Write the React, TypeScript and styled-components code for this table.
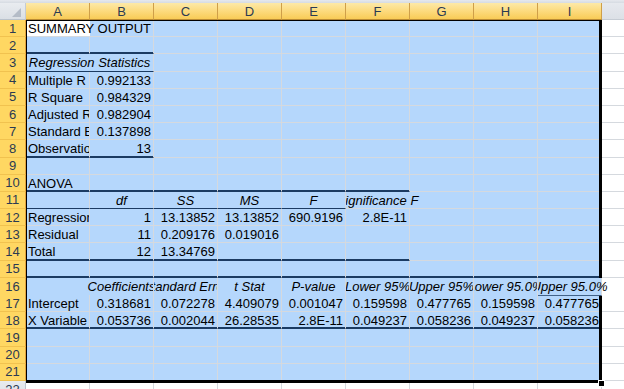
import React from "react";
import styled, { createGlobalStyle, css } from "styled-components";

const COL_W = 64;
const ROW_H = 17.2;
const BLUE = "#b5d7fc";
const GRID = "#d5d9de";
const NAVY = "#1b3b62";
const COLUMNS = `26px repeat(9, ${COL_W}px) 1fr`;
const LETTERS = ["A", "B", "C", "D", "E", "F", "G", "H", "I"];

type Align = "left" | "right" | "center";

interface CellDef {
  col: number;
  text: string;
  span?: number;
  align?: Align;
  italic?: boolean;
  own?: number; // column inside the span that owns the text
  cols?: number; // width of the text box, in columns
  spill?: boolean; // text may run out to the right
}

interface RowDef {
  cells?: CellDef[];
  line?: "thin" | "thick";
  lineTo?: number;
}

const GlobalStyle = createGlobalStyle`
  html, body { margin: 0; padding: 0; background: #fff; }
  body { font-family: "Liberation Sans", Arial, sans-serif; }
`;

const Sheet = styled.div`
  position: relative;
  width: 624px;
  height: 389px;
  overflow: hidden;
  font: 13px "Liberation Sans", Arial, sans-serif;
  color: #000;
  background: #fff;
`;

const TopStrip = styled.div`
  height: 3px;
  background: linear-gradient(#e6e9ee, #d6dbe2);
`;

const HeaderRow = styled.div`
  display: grid;
  grid-template-columns: ${COLUMNS};
  height: 17px;
`;

const Corner = styled.div`
  display: flex;
  align-items: flex-end;
  justify-content: flex-end;
  box-sizing: border-box;
  padding: 0 4px 2px 0;
  background: linear-gradient(#e9ecf0, #dadfe5);
  border-right: 1px solid #c4cbd4;
  border-bottom: 1px solid #b9c2cc;
`;

const ColHead = styled.div<{ $selected: boolean }>`
  box-sizing: border-box;
  display: flex;
  align-items: center;
  justify-content: center;
  color: #2b3a52;
  ${(p) =>
    p.$selected
      ? css`
          background: linear-gradient(#fde9a8, #fcd97a 55%, #f8cb56);
          border-right: 1px solid #cf9f49;
          border-bottom: 1px solid #b98a34;
        `
      : css`
          background: linear-gradient(#e6e9ee, #dce0e6);
          border-bottom: 1px solid #c6ccd4;
        `}
`;

const Row = styled.div`
  display: grid;
  grid-template-columns: ${COLUMNS};
  height: ${ROW_H}px;
`;

const RowHead = styled.div<{ $selected: boolean }>`
  box-sizing: border-box;
  display: flex;
  align-items: center;
  justify-content: center;
  color: #2b3a52;
  ${(p) =>
    p.$selected
      ? css`
          background: #ffd762;
          border-right: 1px solid #e2a23a;
          border-bottom: 1px solid #f1c24f;
        `
      : css`
          background: linear-gradient(#e8ebef, #dde1e7);
          border-right: 1px solid #b9c2cc;
          border-bottom: 1px solid #c6ccd4;
        `}
`;

const Cell = styled.div<{
  $span: number;
  $fill: string;
  $line?: "thin" | "thick";
  $spill?: boolean;
  $edge?: boolean;
}>`
  grid-column: span ${(p) => p.$span};
  box-sizing: border-box;
  min-width: 0;
  background: ${(p) => p.$fill};
  border-right: ${(p) => (p.$edge ? "none" : `1px solid ${GRID}`)};
  border-bottom: 1px solid ${(p) => (p.$line ? NAVY : GRID)};
  box-shadow: ${(p) => (p.$line === "thick" ? `inset 0 -1px 0 ${NAVY}` : "none")};
  overflow: ${(p) => (p.$spill ? "visible" : "hidden")};
  ${(p) =>
    p.$spill &&
    css`
      z-index: 1;
      clip-path: inset(0 -40px 0 0);
    `}
`;

const CellText = styled.div<{ $align: Align; $own: number; $cols: number; $italic?: boolean }>`
  display: flex;
  justify-content: ${(p) =>
    p.$align === "right" ? "flex-end" : p.$align === "center" ? "center" : "flex-start"};
  box-sizing: border-box;
  width: ${(p) => p.$cols * COL_W - 1}px;
  margin-left: ${(p) => p.$own * COL_W}px;
  padding: 0 2px;
  line-height: 17px;
  white-space: nowrap;
  font-style: ${(p) => (p.$italic ? "italic" : "normal")};
`;

const Label = styled.span`
  flex-shrink: 0;
`;

const Selection = styled.div`
  position: absolute;
  top: 20px;
  left: 26px;
  width: 576px;
  height: 363px;
  box-sizing: border-box;
  border: solid #000;
  border-width: 1px 3px 3px 1px;
  pointer-events: none;
`;

const FillHandle = styled.div`
  position: absolute;
  left: 598px;
  top: 380px;
  width: 5px;
  height: 5px;
  background: #000;
  border: 1px solid #fff;
`;

const txt = (col: number, text: string, extra: Partial<CellDef> = {}): CellDef => ({
  col,
  text,
  ...extra,
});
const num = (col: number, text: string): CellDef => ({ col, text, align: "right" });
const head = (col: number, text: string, extra: Partial<CellDef> = {}): CellDef => ({
  col,
  text,
  align: "center",
  italic: true,
  ...extra,
});
const nums = (from: number, values: string[]) => values.map((v, i) => num(from + i, v));

const ROWS: RowDef[] = [
  { cells: [txt(0, "SUMMARY OUTPUT", { span: 2 })] },
  { line: "thick", lineTo: 1 },
  { cells: [head(0, "Regression Statistics", { span: 2, cols: 2 })], line: "thin", lineTo: 1 },
  { cells: [txt(0, "Multiple R"), num(1, "0.992133")] },
  { cells: [txt(0, "R Square"), num(1, "0.984329")] },
  { cells: [txt(0, "Adjusted R Square"), num(1, "0.982904")] },
  { cells: [txt(0, "Standard Error"), num(1, "0.137898")] },
  { cells: [txt(0, "Observations"), num(1, "13")], line: "thick", lineTo: 1 },
  {},
  { cells: [txt(0, "ANOVA")], line: "thick", lineTo: 5 },
  {
    cells: [
      head(1, "df"),
      head(2, "SS"),
      head(3, "MS"),
      head(4, "F"),
      head(5, "Significance F", { span: 2 }),
    ],
    line: "thin",
    lineTo: 5,
  },
  { cells: [txt(0, "Regression"), ...nums(1, ["1", "13.13852", "13.13852", "690.9196", "2.8E-11"])] },
  { cells: [txt(0, "Residual"), ...nums(1, ["11", "0.209176", "0.019016"])] },
  { cells: [txt(0, "Total"), ...nums(1, ["12", "13.34769"])], line: "thick", lineTo: 5 },
  { line: "thick", lineTo: 8 },
  {
    cells: [
      head(0, "Coefficients", { span: 2, own: 1 }),
      head(2, "Standard Error"),
      head(3, "t Stat"),
      head(4, "P-value"),
      head(5, "Lower 95%"),
      head(6, "Upper 95%"),
      head(7, "Lower 95.0%"),
      head(8, "Upper 95.0%", { spill: true }),
    ],
    line: "thin",
    lineTo: 8,
  },
  {
    cells: [
      txt(0, "Intercept"),
      ...nums(1, ["0.318681", "0.072278", "4.409079", "0.001047", "0.159598", "0.477765", "0.159598", "0.477765"]),
    ],
  },
  {
    cells: [
      txt(0, "X Variable 1"),
      ...nums(1, ["0.053736", "0.002044", "26.28535", "2.8E-11", "0.049237", "0.058236", "0.049237", "0.058236"]),
    ],
    line: "thick",
    lineTo: 8,
  },
  {},
  {},
  {},
  {},
];

const SELECTED_ROWS = 21;

function fillFor(n: number, col: number, span: number) {
  if (n > SELECTED_ROWS || col === 9) return "#fff";
  if (n === 1 && col === 0) {
    return span > 1 ? `linear-gradient(to right, #fff ${COL_W}px, ${BLUE} ${COL_W}px)` : "#fff";
  }
  return BLUE;
}

const SheetRow = ({ n, row }: { n: number; row: RowDef }) => {
  const cells: React.ReactNode[] = [];
  let col = 0;
  while (col < 10) {
    const def = row.cells?.find((c) => c.col === col);
    const span = def?.span ?? 1;
    const line = row.line && row.lineTo !== undefined && col + span - 1 <= row.lineTo ? row.line : undefined;
    cells.push(
      <Cell
        key={col}
        $span={span}
        $fill={fillFor(n, col, span)}
        $line={line}
        $spill={def?.spill}
        $edge={col === 9}
      >
        {def && (
          <CellText
            $align={def.align ?? "left"}
            $own={def.own ?? 0}
            $cols={def.cols ?? 1}
            $italic={def.italic}
          >
            <Label>{def.text}</Label>
          </CellText>
        )}
      </Cell>
    );
    col += span;
  }
  return (
    <Row>
      <RowHead $selected={n <= SELECTED_ROWS}>{n}</RowHead>
      {cells}
    </Row>
  );
};

export default function App() {
  return (
    <>
      <GlobalStyle />
      <Sheet>
        <TopStrip />
        <HeaderRow>
          <Corner>
            <svg width="9" height="9" viewBox="0 0 9 9">
              <path d="M0 9 L9 9 L9 0 Z" fill="#b4bcc7" />
            </svg>
          </Corner>
          {LETTERS.map((l) => (
            <ColHead key={l} $selected>
              {l}
            </ColHead>
          ))}
          <ColHead $selected={false} />
        </HeaderRow>
        {[...ROWS, {} as RowDef].map((row, i) => (
          <SheetRow key={i} n={i + 1} row={row} />
        ))}
        <Selection />
        <FillHandle />
      </Sheet>
    </>
  );
}
